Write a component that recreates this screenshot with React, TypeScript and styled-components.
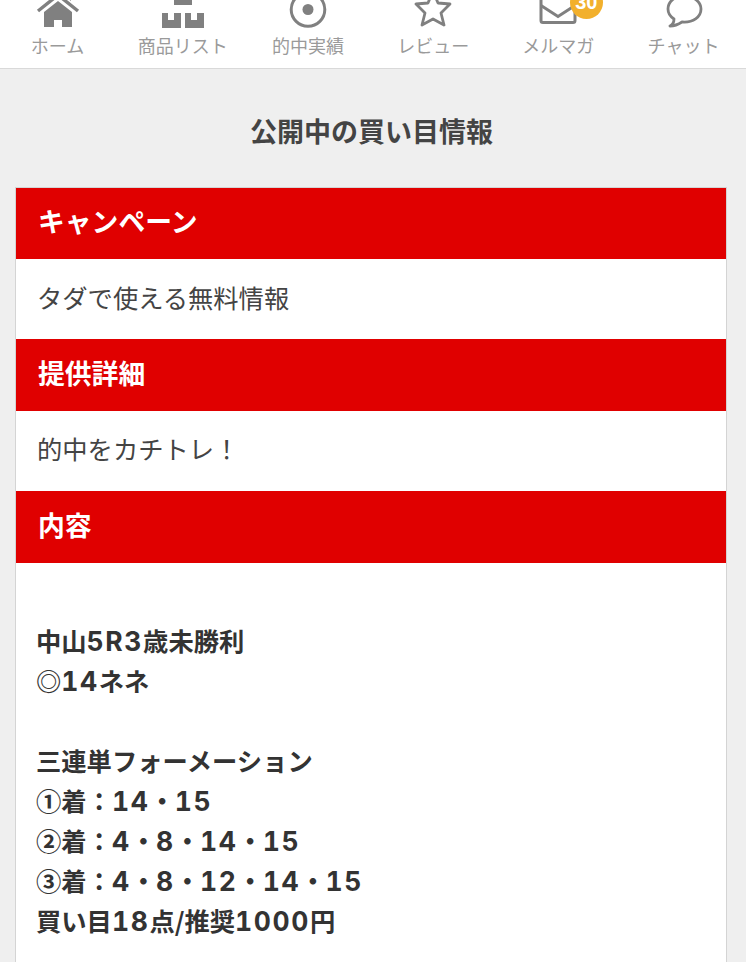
import React from "react";
import styled, { createGlobalStyle } from "styled-components";

const Global = createGlobalStyle`
  html, body { margin: 0; padding: 0; background: #efefef; }
  body { font-family: "Noto Sans CJK JP", "Liberation Sans", sans-serif; overflow: hidden; }
  #root { height: 962px; overflow: hidden; }
`;

const Nav = styled.nav`
  height: 68px;
  box-sizing: border-box;
  background: #fff;
  overflow: hidden;
  display: flex;
  align-items: flex-end;
  padding-bottom: 11px;
`;
const NavRow = styled.div`
  display: grid;
  grid-template-columns: repeat(6, 125.2px);
  margin-left: -5px;
  flex: none;
`;
const NavItem = styled.a`
  display: flex;
  flex-direction: column;
  align-items: center;
  color: #9a9a9a;
  font-size: 18px;
  line-height: 24px;
  white-space: nowrap;
`;
const IconWrap = styled.div`
  width: 44px;
  height: 36px;
  display: flex;
  align-items: flex-end;
  justify-content: center;
  position: relative;
  margin-bottom: 5px;
  color: #808080;
`;
const Badge = styled.span`
  position: absolute;
  left: 33.5px;
  top: -6.5px;
  width: 33px;
  height: 33px;
  border-radius: 50%;
  background: #f2b02c;
  color: #fff;
  font: bold 20px/33px "Liberation Sans", sans-serif;
  text-align: center;
`;
const Rule = styled.div`
  height: 1px;
  background: #d9d9d9;
`;
const Title = styled.h1`
  margin: 0;
  height: 117.5px;
  display: flex;
  align-items: center;
  justify-content: center;
  font-size: 27px;
  font-weight: 700;
  color: #444;
  padding: 6px 3px 0 0;
  box-sizing: border-box;
`;
const Card = styled.section`
  margin: 0 19px 0 15px;
  background: #fff;
  border: 1px solid #d4d4d4;
  border-bottom: 0;
`;
const Head = styled.h2`
  margin: 0;
  height: 71.7px;
  box-sizing: border-box;
  background: #e00000;
  color: #fff;
  font-size: 26.8px;
  font-weight: 700;
  display: flex;
  align-items: center;
  padding: 0 22px 5px;
`;
const Lead = styled.p`
  margin: 0;
  height: 80px;
  box-sizing: border-box;
  display: flex;
  align-items: center;
  padding: 0 21px 5px;
  font-size: 25.3px;
  color: #444;
`;
const Body = styled.div`
  padding: 57px 20px 60px;
  font-size: 25.3px;
  font-weight: 700;
  line-height: 40px;
  color: #333;
  min-height: 400px;
`;
const Line = styled.div`
  height: 40px;
  white-space: nowrap;
`;
const Latin = styled.span`
  font-family: "Inter", "Liberation Sans", sans-serif;
  font-size: 26.5px;
  line-height: 1;
  letter-spacing: 1.6px;
  font-variant-numeric: tabular-nums;
`;

const Home = () => (
  <svg width="44" height="36" viewBox="0 0 44 36" fill="currentColor">
    <path d="M22 9 L8 20 L8 35 L18 35 L18 28 L26 28 L26 35 L36 35 L36 20 Z" />
    <path d="M2 19 L22 3 L42 19" fill="none" stroke="currentColor" strokeWidth="3.4" />
    <path d="M30 0h5v9l-5-4z" />
  </svg>
);
const Boxes = () => (
  <svg width="42" height="36" viewBox="0 0 42 36" fill="currentColor">
    <path d="M12 0h18v13H12z" />
    <path d="M0 21h6v7h6v-7h7v15H0z" />
    <path d="M23 21h6v7h6v-7h7v15H23z" />
  </svg>
);
const Target = () => (
  <svg width="38" height="36" viewBox="0 0 38 36" fill="none" stroke="currentColor">
    <circle cx="19" cy="17.5" r="16.8" strokeWidth="3" />
    <circle cx="19" cy="17.5" r="5.5" fill="currentColor" stroke="none" />
  </svg>
);
const Star = () => (
  <svg width="38" height="36" viewBox="0 0 38 36" fill="none" stroke="currentColor" strokeWidth="2.8" strokeLinejoin="round">
    <path d="M19 -1 L24 11 L36 12 L27 21 L30 33 L19 27 L8 33 L11 21 L2 12 L14 11 Z" />
  </svg>
);
const Mail = () => (
  <svg width="38" height="36" viewBox="0 -1.5 38 36" fill="none" stroke="currentColor" strokeWidth="3">
    <rect x="2" y="2" width="34" height="27" rx="2" />
    <path d="M2 12 L19 23 L36 12" />
  </svg>
);
const Chat = () => (
  <svg width="38" height="36" viewBox="0 -2 38 36" fill="none" stroke="currentColor" strokeWidth="2.8" strokeLinejoin="round">
    <path d="M19 2 C9 2 3 8 3 15 C3 20 6 23 9 25 C9 28 7 31 5 32 C10 32 14 30 17 28 C28 29 36 23 36 15 C36 8 29 2 19 2 Z" />
  </svg>
);

const items = [
  { label: "ホーム", Icon: Home },
  { label: "商品リスト", Icon: Boxes },
  { label: "的中実績", Icon: Target },
  { label: "レビュー", Icon: Star },
  { label: "メルマガ", Icon: Mail, badge: "30" },
  { label: "チャット", Icon: Chat },
];

const lines = [
  "中山5R3歳未勝利",
  "◎14ネネ",
  "",
  "三連単フォーメーション",
  "①着：14・15",
  "②着：4・8・14・15",
  "③着：4・8・12・14・15",
  "買い目18点/推奨1000円",
];

const withLatin = (text: string) =>
  text.split(/([0-9A-Za-z]+)/).map((part, i) =>
    i % 2 === 1 ? <Latin key={i}>{part}</Latin> : part
  );

export default function App() {
  return (
    <>
      <Global />
      <Nav>
        <NavRow>
          {items.map(({ label, Icon, badge }) => (
            <NavItem key={label}>
              <IconWrap>
                <Icon />
                {badge && <Badge>{badge}</Badge>}
              </IconWrap>
              {label}
            </NavItem>
          ))}
        </NavRow>
      </Nav>
      <Rule />
      <Title>公開中の買い目情報</Title>
      <Card>
        <Head>キャンペーン</Head>
        <Lead>タダで使える無料情報</Lead>
        <Head>提供詳細</Head>
        <Lead>的中をカチトレ！</Lead>
        <Head>内容</Head>
        <Body>
          {lines.map((l, i) => (
            <Line key={i}>{withLatin(l)}</Line>
          ))}
        </Body>
      </Card>
    </>
  );
}
